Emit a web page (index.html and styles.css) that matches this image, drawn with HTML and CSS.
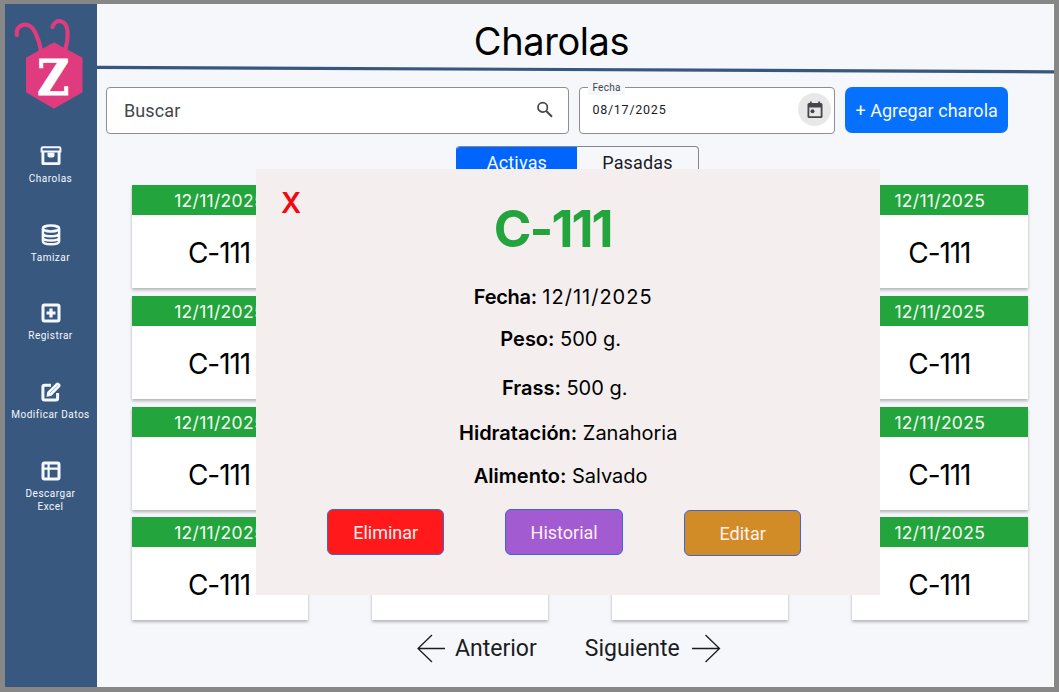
FILE: index.html
```html
<!DOCTYPE html>
<html lang="es">
<head>
<meta charset="utf-8">
<title>Charolas</title>
<link rel="stylesheet" href="styles.css">
</head>
<body>
<div class="app">
  <nav class="sidebar">
    <svg class="logo" width="92" height="110" viewBox="0 0 92 110">
      <g fill="none" stroke="#df3b7e" stroke-width="4.2" stroke-linecap="round">
        <path d="M12 31C10 20 24 16 30 28C33 34 35 40 36 47"/>
        <path d="M47.500 23C50 14 62 15 62.500 28C63 34 62 40 60 46"/>
      </g>
      <path d="M49 40L76 54.500V87.500L49 103L22.500 87.500V54.500Z" fill="#df3b7e" stroke="#df3b7e" stroke-width="3" stroke-linejoin="round"/>
      <text class="logo-letter" x="48.300" y="91" text-anchor="middle" textLength="32" lengthAdjust="spacingAndGlyphs">Z</text>
    </svg>
    <a class="nav-item">
      <svg width="22" height="22" viewBox="0 0 22 22" fill="none" stroke="#f5f9ff"><path d="M1.600 3.400Q1.600 2.200 2.800 2.200H19.200Q20.400 2.200 20.400 3.400V6.600H1.600Z" stroke-width="2"/><path d="M2.900 7V18.600H19.100V7" stroke-width="2.900" stroke-linejoin="round"/><path d="M7.500 7.500V10.500Q7.500 12.500 11 12.500Q14.500 12.500 14.500 10.500V7.500Z" fill="#f5f9ff" stroke="none"/></svg>
      <span>Charolas</span>
    </a>
    <a class="nav-item">
      <svg width="22" height="22" viewBox="0 0 22 22" fill="none" stroke="#f5f9ff" stroke-width="2.500"><ellipse cx="11" cy="4.500" rx="8.100" ry="2.900"/><path d="M2.900 5V17.300C2.900 21.300 19.100 21.300 19.100 17.300V5M2.900 9.300C2.900 13.300 19.100 13.300 19.100 9.300M2.900 13.500C2.900 17.500 19.100 17.500 19.100 13.500"/></svg>
      <span>Tamizar</span>
    </a>
    <a class="nav-item">
      <svg width="22" height="22" viewBox="0 0 22 22" fill="none" stroke="#f5f9ff"><rect x="3" y="3" width="16" height="16" rx="1.500" stroke-width="3"/><path d="M11 6.500V15.500M6.500 11H15.500" stroke-width="3.200"/></svg>
      <span>Registrar</span>
    </a>
    <a class="nav-item">
      <svg width="22" height="22" viewBox="0 0 22 22" fill="none" stroke="#f5f9ff"><path d="M11 4.200H4.700Q2.900 4.200 2.900 6V17.300Q2.900 19.100 4.700 19.100H15.800Q17.600 19.100 17.600 17.300V12" stroke-width="3"/><path d="M6.500 15.800L7.200 11L16 2.200Q17.500 .8 19 2.200L20 3.200Q21.400 4.600 20 6.100L11.200 14.900Z" fill="#f5f9ff" stroke="none"/><path d="M10 12L18 4.200" stroke="#a9bad1" stroke-width="1"/></svg>
      <span>Modificar Datos</span>
    </a>
    <a class="nav-item">
      <svg width="22" height="22" viewBox="0 0 22 22" fill="none" stroke="#f5f9ff"><rect x="3" y="3" width="16" height="16" rx="1.500" stroke-width="3"/><path d="M8.600 3V19M3 8.600H19" stroke-width="2.200"/></svg>
      <span>Descargar<br>Excel</span>
    </a>
  </nav>

  <main class="content">
    <header class="header"><h1>Charolas</h1></header>
    <svg class="rule" width="958" height="10" viewBox="0 0 958 10"><path d="M0 2.300L958 6.800" stroke="#38577f" stroke-width="3.200"/></svg>

    <div class="toolbar">
      <div class="search"><span>Buscar</span>
        <svg width="20" height="20" viewBox="0 0 20 20" fill="none" stroke="#44464b"><circle cx="7.700" cy="7.400" r="4.700" stroke-width="1.700"/><path d="M11.200 11L17 16.800" stroke-width="2"/></svg>
      </div>
      <div class="date"><span class="date-label">Fecha</span><span>08/17/2025</span>
        <span class="date-button"><svg width="20" height="20" viewBox="0 0 20 20"><path d="M4 3H16Q17.500 3 17.500 4.500V16.500Q17.500 18 16 18H4Q2.500 18 2.500 16.500V4.500Q2.500 3 4 3ZM4.300 7.500V16.300H15.700V7.500Z" fill="#44464b" fill-rule="evenodd"/><path d="M5.800 1.500V4M14.200 1.500V4" stroke="#44464b" stroke-width="1.800"/><circle cx="7.500" cy="11.300" r="2" fill="#44464b"/></svg></span>
      </div>
      <button class="add">+ Agregar charola</button>
    </div>

    <div class="tabs"><span class="tab tab-active">Activas</span><span class="tab">Pasadas</span></div>

    <section class="grid">
      <article class="card"><time>12/11/2025</time><b>C-111</b></article>
      <article class="card"><time>12/11/2025</time><b>C-111</b></article>
      <article class="card"><time>12/11/2025</time><b>C-111</b></article>
      <article class="card"><time>12/11/2025</time><b>C-111</b></article>
      <article class="card"><time>12/11/2025</time><b>C-111</b></article>
      <article class="card"><time>12/11/2025</time><b>C-111</b></article>
      <article class="card"><time>12/11/2025</time><b>C-111</b></article>
      <article class="card"><time>12/11/2025</time><b>C-111</b></article>
      <article class="card"><time>12/11/2025</time><b>C-111</b></article>
      <article class="card"><time>12/11/2025</time><b>C-111</b></article>
      <article class="card"><time>12/11/2025</time><b>C-111</b></article>
      <article class="card"><time>12/11/2025</time><b>C-111</b></article>
      <article class="card"><time>12/11/2025</time><b>C-111</b></article>
      <article class="card"><time>12/11/2025</time><b>C-111</b></article>
      <article class="card"><time>12/11/2025</time><b>C-111</b></article>
      <article class="card"><time>12/11/2025</time><b>C-111</b></article>
    </section>

    <footer class="pager">
      <a class="previous"><svg width="29" height="30" viewBox="0 0 29 30" fill="none" stroke="#1b1c1f" stroke-width="1.300"><path d="M28 14.500H1M15 1L1 14.500L15 28"/></svg><span>Anterior</span></a>
      <a class="next"><span>Siguiente</span><svg width="29" height="30" viewBox="0 0 29 30" fill="none" stroke="#1b1c1f" stroke-width="1.300"><path d="M0 14.500H27.500M13.500 1L27.500 14.500L13.500 28"/></svg></a>
    </footer>
  </main>

  <section class="modal">
    <button class="close">X</button>
    <h2>C-111</h2>
    <p class="row row-date"><strong>Fecha:</strong> <span>12/11/2025</span></p>
    <p class="row row-weight"><strong>Peso:</strong> 500 g.</p>
    <p class="row row-frass"><strong>Frass:</strong> 500 g.</p>
    <p class="row row-water"><strong>Hidratación:</strong> Zanahoria</p>
    <p class="row row-food"><strong>Alimento:</strong> Salvado</p>
    <div class="actions">
      <button class="action delete">Eliminar</button>
      <button class="action history">Historial</button>
      <button class="action edit">Editar</button>
    </div>
  </section>
</div>
</body>
</html>
```
FILE: styles.css
```css
* { box-sizing: border-box; }
body { margin: 0; font-family: Roboto, sans-serif; color: #1b1c1f; }
h1, h2, p { margin: 0; font-weight: 400; }
button { font: inherit; padding: 0; }
svg { display: block; flex: none; }

.app { position: relative; display: flex; width: 1059px; height: 692px; overflow: hidden; border: 5px solid #878787; border-top-width: 4px; background: #f5f7fb; }

.sidebar { width: 92px; background: #395880; display: flex; flex-direction: column; padding-right: 1px; }
.logo { margin-bottom: 31px; }
.logo-letter { font: bold 49px "DejaVu Serif", serif; fill: #fff; stroke: #fff; stroke-width: 1px; }
.nav-item { height: 78.700px; display: flex; flex-direction: column; align-items: center; gap: 5px; color: #f5f9ff; font-size: 10px; font-weight: 400; line-height: 13px; letter-spacing: .5px; text-align: center; white-space: nowrap; }

.content { flex: 1; min-width: 0; display: flex; flex-direction: column; border-right: 1px solid #fff; }
.header { height: 61px; padding: 13px 47px 0 0; text-align: center; }
h1 { font: 400 38px/48px Inter, sans-serif; color: #000; letter-spacing: -.4px; }
.rule { width: 958px; }
.toolbar { display: flex; gap: 10px; padding: 12px 0 0 9px; height: 71px; }
.search, .date { height: 46.500px; border: 1px solid #8c8e92; border-radius: 4px; background: #fff; display: flex; align-items: center; justify-content: space-between; }
.search { width: 463.400px; padding: 0 13px 0 17px; font-size: 18px; letter-spacing: .1px; color: #44464b; }
.date { position: relative; width: 256px; padding: 0 3px 1px 12px; font-size: 12.500px; letter-spacing: .75px; }
.date-label { position: absolute; top: -7px; left: 8px; padding: 0 4px; background: #f5f7fb; font-size: 10px; line-height: 14px; letter-spacing: .3px; color: #44464b; }
.date-button { width: 33px; height: 33px; border-radius: 50%; background: #e8e8e8; display: flex; align-items: center; justify-content: center; }
.add { width: 162.500px; height: 46px; border: 0; border-radius: 7px; background: #0670ff; color: #f5f9ff; font-size: 18px; letter-spacing: .03px; }

.tabs { display: flex; width: 243px; height: 32px; margin-left: 358.700px; border: 1px solid #85878c; border-left-color: #0065ff; border-radius: 4px; overflow: hidden; font-size: 18px; line-height: 32px; letter-spacing: .15px; }
.tab { flex: 1; text-align: center; }
.tab-active { background: #0065ff; color: #f5f9ff; }

.grid { display: grid; grid-template-columns: repeat(4, 176px); grid-auto-rows: 103px; gap: 7.800px 64.100px; margin: 7px 0 0 34.500px; }
.card { background: #fff; box-shadow: 0 2px 3px rgba(0, 0, 0, .28); font-family: Inter, sans-serif; text-align: center; }
.card time { display: block; height: 30px; background: #24a43c; color: #f4fff5; font-size: 17.500px; line-height: 31px; letter-spacing: .3px; }
.card b { display: block; font-weight: 400; font-size: 28px; line-height: 76px; color: #000; letter-spacing: -1.100px; padding-right: 1px; }

.pager { display: flex; gap: 48px; margin: 14px 0 0 320px; font-size: 23px; line-height: 30px; }
.previous, .next { display: flex; align-items: center; }
.previous { gap: 9px; }
.next { gap: 12px; }

.modal { position: absolute; left: 251px; top: 165px; width: 624.400px; height: 426px; background: #f4eeee; color: #000; font-family: Inter, sans-serif; text-align: center; display: flex; flex-direction: column; align-items: center; }
.close { align-self: flex-start; height: 34px; margin: 17px 0 0 25px; border: 0; background: none; color: #f0090e; font: 600 28px/34px Inter, sans-serif; }
.modal h2 { height: 52px; margin-top: -17px; padding-right: 31px; color: #24a43c; font-size: 51px; font-weight: 700; line-height: 52px; letter-spacing: -1.900px; }
.row { height: 26px; font-size: 20px; line-height: 26px; white-space: nowrap; }
.row strong { font-weight: 600; }
.row-date { margin-top: 29px; padding-right: 10px; }
.row-date strong { letter-spacing: -.3px; }
.row-date span { letter-spacing: 1px; }
.row-weight { margin-top: 16px; padding-right: 15px; }
.row-frass { margin-top: 23px; padding-right: 7px; }
.row-water { margin-top: 19px; }
.row-food { margin-top: 17px; padding-right: 15px; }
.actions { display: flex; gap: 61px; margin-top: 20px; padding-right: 8px; }
.action { width: 117.500px; height: 46px; border: 1px solid #3b67d5; border-radius: 6px; color: #fff0f0; font: 18px Roboto, sans-serif; letter-spacing: 0; }
.delete { background: #ff191b; }
.history { background: #a25bd1; }
.edit { background: #d18b27; margin-top: 1px; }
```
